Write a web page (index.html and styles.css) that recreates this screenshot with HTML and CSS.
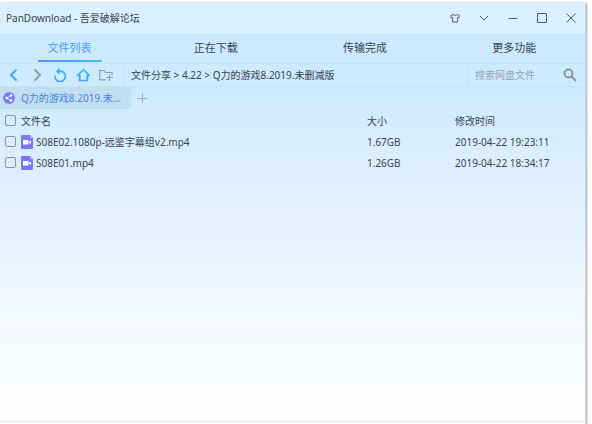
FILE: index.html
```html
<!DOCTYPE html>
<html lang="zh-CN">
<head>
<meta charset="utf-8">
<title>PanDownload</title>
<link rel="stylesheet" href="styles.css">
</head>
<body>
<div class="window">
  <header class="titlebar">
    <h1 class="title">PanDownload - 吾爱破解论坛</h1>
    <div class="controls">
      <button type="button" aria-label="皮肤"><svg viewBox="0 0 12 12"><path d="M4 2.500 2 3.300v2.400h1.600v4.300h5V5.700h1.600V3.300L8.200 2.500C7.400 3.600 4.800 3.600 4 2.500Z"/></svg></button>
      <button type="button" aria-label="菜单"><svg viewBox="0 0 12 12"><path d="m2 4 4 4 4-4"/></svg></button>
      <button type="button" aria-label="最小化"><svg viewBox="0 0 12 12"><path d="M1.500 6.500h9"/></svg></button>
      <button type="button" aria-label="最大化"><svg viewBox="0 0 12 12"><path d="M1.500 1.500h9v9h-9z"/></svg></button>
      <button type="button" aria-label="关闭"><svg viewBox="0 0 12 12"><path d="m1.500 1.500 9 9m0-9-9 9"/></svg></button>
    </div>
  </header>
  <nav class="nav">
    <a href="#files" class="active">文件列表</a>
    <a href="#downloading">正在下载</a>
    <a href="#done">传输完成</a>
    <a href="#more">更多功能</a>
  </nav>
  <div class="toolbar">
    <div class="actions">
      <button type="button" aria-label="后退"><svg class="blue" viewBox="0 0 14 14"><defs><linearGradient id="g" gradientUnits="userSpaceOnUse" x1="0" y1="1" x2="0" y2="13"><stop offset="0" stop-color="#25c4fa"/><stop offset="1" stop-color="#489cff"/></linearGradient></defs><path d="M9.500 1.500 4 7l5.500 5.500"/></svg></button>
      <button type="button" aria-label="前进"><svg class="gray" viewBox="0 0 14 14"><path d="M4.500 1.500 10 7l-5.500 5.500"/></svg></button>
      <button type="button" aria-label="刷新"><svg class="blue thin" viewBox="0 0 14 14"><path d="M2 7.600a5.200 5.200 0 1 0 5.500-4.400H4M6.600.600 4 3.200l2.600 2.600"/></svg></button>
      <button type="button" aria-label="主页"><svg class="blue thin" viewBox="0 0 14 14"><path d="M7.500 1.700 1.700 7.500h2v5h7.600v-5h2Z"/></svg></button>
      <button type="button" aria-label="新建文件夹"><svg class="gray folder" viewBox="0 0 14 14"><path d="M7 11.800H.800V2.500h4l1.500 2H13v2.500M10.500 6.500v6.500M7.500 9.500H14"/></svg></button>
    </div>
    <div class="path">文件分享 &gt; 4.22 &gt; Q力的游戏8.2019.未删减版</div>
    <form class="search">
      <input type="text" aria-label="搜索网盘文件" placeholder="搜索网盘文件">
      <button type="button" aria-label="搜索"><svg viewBox="0 0 14 14"><circle cx="5.500" cy="5.500" r="4"/><path d="m8.500 8.500 4.500 4.500"/></svg></button>
    </form>
  </div>
  <div class="tabs">
    <a href="#share" class="tab"><svg viewBox="0 0 12 12"><circle cx="6" cy="6" r="6" fill="#7b7df6"/><path d="M8 3.500 3.800 6 8 8.500" fill="none" stroke="#fff" stroke-width=".8"/><circle cx="8" cy="3.500" r="1.200" fill="#fff"/><circle cx="3.800" cy="6" r="1.200" fill="#fff"/><circle cx="8" cy="8.500" r="1.200" fill="#fff"/></svg><span>Q力的游戏8.2019.未...</span></a>
    <button type="button" class="add" aria-label="新标签"><svg viewBox="0 0 12 12"><path d="M6.500 1v10M1 6.500h10"/></svg></button>
  </div>
  <main class="content">
    <table>
      <thead>
        <tr><th class="name"><label><input type="checkbox">文件名</label></th><th class="size">大小</th><th class="date">修改时间</th></tr>
      </thead>
      <tbody>
        <tr><td><label><input type="checkbox"><svg viewBox="0 0 12 14"><path d="M1 0h8l3 3v10a1 1 0 0 1-1 1H1a1 1 0 0 1-1-1V1a1 1 0 0 1 1-1Z" fill="#7b78f6"/><path d="M9 0v3h3Z" fill="#b9b9fa"/><path d="M2 5h5.500v4.500H2zM8 7l2-1.500V9L8 7.700Z" fill="#fff"/></svg>S08E02.1080p-远鉴字幕组v2.mp4</label></td><td>1.67GB</td><td>2019-04-22 19:23:11</td></tr>
        <tr><td><label><input type="checkbox"><svg viewBox="0 0 12 14"><path d="M1 0h8l3 3v10a1 1 0 0 1-1 1H1a1 1 0 0 1-1-1V1a1 1 0 0 1 1-1Z" fill="#7b78f6"/><path d="M9 0v3h3Z" fill="#b9b9fa"/><path d="M2 5h5.500v4.500H2zM8 7l2-1.500V9L8 7.700Z" fill="#fff"/></svg>S08E01.mp4</label></td><td>1.26GB</td><td>2019-04-22 18:34:17</td></tr>
      </tbody>
    </table>
  </main>
  <footer class="status"></footer>
</div>
</body>
</html>
```
FILE: styles.css
```css
* { box-sizing: border-box; }
body {
  margin: 0;
  padding: 3px 6px 0 0;
  height: 100vh;
  background: #fff;
  color: #39454e;
  font: 10px/20px "Noto Sans", "Noto Sans CJK SC", sans-serif;
}
button, input { font: inherit; color: inherit; margin: 0; }
button { display: flex; align-items: center; justify-content: center; padding: 0; border: 0; background: none; }
a { color: inherit; text-decoration: none; }
svg { flex: none; fill: none; }

.window {
  display: flex;
  flex-direction: column;
  height: 100%;
  border-right: 1px solid #cdd3d8;
  background: linear-gradient(#cae9ff 30px, #cfeafe 90px, #d9eefe 150px, #e6f4fe 240px, #f3faff 320px, #fafdff 380px, #fdfefe 400px);
  box-shadow: 1px 0 2px #aaa;
}
.titlebar {
  display: flex;
  align-items: center;
  justify-content: space-between;
  height: 30px;
  padding-left: 6px;
  background: #daf0ff;
}
.title { margin: 0; font-size: 10px; font-weight: 400; }
.controls { display: flex; }
.controls button { width: 29px; height: 30px; }
.controls svg { width: 12px; height: 12px; stroke: #4f5c66; }

.nav { display: grid; grid-template-columns: 139px 1fr 1fr 1fr; column-gap: 4px; height: 30px; margin-right: -2px; font-size: 11px; line-height: 30px; text-align: center; }
.nav .active {
  justify-self: center;
  width: 64px;
  height: 29px;
  color: #4e9bf0;
  border-bottom: 2px solid;
  border-image: linear-gradient(90deg, #5c8ff8, #38c2fb) 1;
}

.toolbar { display: flex; align-items: center; height: 24px; border-top: 1px solid #c6e2f7; border-bottom: 1px solid #c6e2f7; }
.actions { display: flex; padding: 0 6px 0 2px; border-right: 1px solid #c6e2f7; }
.actions button { width: 23px; height: 22px; }
.actions button:last-child { width: 24px; }
.actions svg { width: 14px; height: 14px; stroke-width: 2; }
.blue { stroke: url(#g); }
.gray { stroke: #969ca3; }
.actions .thin { stroke-width: 1.7; }
.actions .folder { stroke-width: 1.2; }
.path { flex: 1; padding-left: 6px; white-space: nowrap; }
.search { display: flex; align-items: center; width: 118px; border-left: 1px solid #c6e2f7; padding: 0 8px 0 7px; }
.search input { flex: 1; min-width: 0; padding: 0; border: 0; background: none; outline: 0; }
.search input::placeholder { color: #98a5b0; opacity: 1; }
.search svg { width: 14px; height: 14px; stroke: #8c969f; stroke-width: 2; }

.tabs { display: flex; height: 22px; }
.tab { display: flex; align-items: center; gap: 6px; width: 131px; padding-left: 3px; color: #4286e2; background: #c3deef; white-space: nowrap; }
.tab svg { width: 12px; height: 12px; }
.add { width: 22px; }
.add svg { width: 12px; height: 12px; stroke: #9eafbc; }

.content { flex: 1; padding-top: 1px; }
table { width: 100%; table-layout: fixed; border-collapse: collapse; }
th, td { height: 21px; padding: 0; font-weight: 400; text-align: left; white-space: nowrap; }
.size { width: 88px; }
.date { width: 130px; }
label { display: flex; align-items: center; gap: 5px; padding-left: 5px; }
label svg { width: 12px; height: 14px; margin-right: -2px; }
label input { appearance: none; width: 11px; height: 11px; border: 1px solid #87939c; border-radius: 2px; }
.status { height: 3px; border-top: 1px solid #e9eef0; }
```
